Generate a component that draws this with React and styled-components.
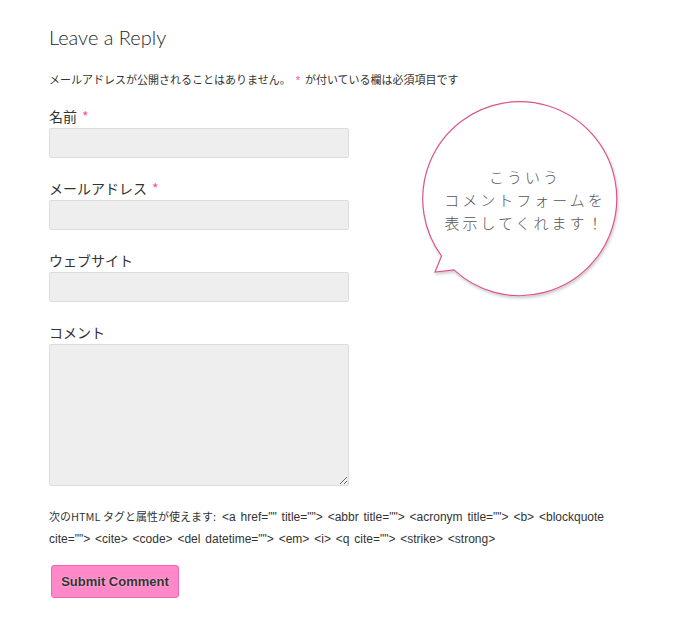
import React from "react";
import styled, { createGlobalStyle } from "styled-components";

const GlobalStyle = createGlobalStyle`
  body {
    margin: 0;
    background: #ffffff;
    font-family: "Liberation Sans", "Noto Sans CJK JP", sans-serif;
    color: #333333;
  }
`;

const Page = styled.div`
  position: relative;
  width: 690px;
  height: 627px;
  padding: 22px 0 0 49px;
  box-sizing: border-box;
`;

const Title = styled.h3`
  margin: 0 0 20px;
  font-family: "Lato", "Noto Sans CJK JP", sans-serif;
  font-weight: 300;
  font-size: 20px;
  line-height: 30px;
  color: #1f1f1f;
`;

const Notes = styled.p`
  margin: 0 0 19px;
  font-size: 11px;
  line-height: 16px;
  color: #333;
`;

const Required = styled.span`
  color: #ff4f9f;
  margin: 0 ${(p) => (p.$tight ? 0 : 5)}px 0 5px;
`;

const Field = styled.div`
  display: flex;
  flex-direction: column;
  margin-bottom: 21px;
`;

const Label = styled.label`
  font-size: 14px;
  line-height: 18px;
  margin-bottom: 3px;
  color: #333;
  font-family: "Noto Sans CJK JP", sans-serif;
  font-weight: 400;
`;

const Input = styled.input`
  width: 300px;
  height: 30px;
  box-sizing: border-box;
  background: #eeeeee;
  border: 1px solid #dcdcdc;
  border-radius: 2px;
  margin: 0;
`;

const TextArea = styled.textarea`
  width: 300px;
  height: 142px;
  box-sizing: border-box;
  background: #eeeeee;
  border: 1px solid #dcdcdc;
  border-radius: 2px;
  margin: 0;
  display: block;
`;

const Allowed = styled.p`
  margin: -1px 0 15px;
  width: 580px;
  font-size: 12px;
  line-height: 22px;
  word-spacing: 1.5px;
  color: #333;
`;

const AllowedIntro = styled.span`
  font-family: "Noto Sans CJK JP", sans-serif;
  font-size: 11px;
  line-height: 16px;
  word-spacing: 0;
  margin-right: 6px;
`;

const SubmitButton = styled.button`
  display: block;
  margin-left: 2px;
  width: 128px;
  height: 33px;
  background: #ff88c8;
  border: 1px solid #f266b4;
  border-radius: 3px;
  font-family: "Liberation Sans", sans-serif;
  font-weight: bold;
  font-size: 13px;
  color: #333;
  text-shadow: 0 0 2px rgba(255, 255, 255, 0.6);
  padding: 0;
`;

const Bubble = styled.div`
  position: absolute;
  left: 420px;
  top: 98px;
  width: 210px;
  height: 210px;

  svg {
    display: block;
  }
`;

const BubbleText = styled.div`
  position: absolute;
  left: 0;
  width: 206px;
  top: 67px;
  text-align: center;
  font-family: "Noto Sans CJK JP", sans-serif;
  font-weight: 300;
  font-size: 15px;
  line-height: 23px;
  letter-spacing: 3px;
  color: #555;
  padding-left: 2px;
`;

const SpeechBubble = () => (
  <Bubble>
    <svg width="210" height="210" viewBox="0 0 210 210">
      <defs>
        <filter id="sh" x="-10%" y="-10%" width="125%" height="125%">
          <feDropShadow dx="1" dy="2" stdDeviation="1.5" floodColor="#000" floodOpacity="0.2" />
        </filter>
      </defs>
      <path
        d="M 21.5 158 A 97 97 0 1 1 33.9 171.9 L 15 174 Z"
        fill="#fff"
        stroke="#d9558c"
        strokeWidth="1.2"
        filter="url(#sh)"
      />
    </svg>
    <BubbleText>
      こういう
      <br />
      コメントフォームを
      <br />
      表示してくれます！
    </BubbleText>
  </Bubble>
);

export default function App() {
  return (
    <>
      <GlobalStyle />
      <Page>
        <Title>Leave a Reply</Title>
        <Notes>
          メールアドレスが公開されることはありません。<Required>*</Required>が付いている欄は必須項目です
        </Notes>
        <Field>
          <Label>
            名前<Required $tight>*</Required>
          </Label>
          <Input type="text" />
        </Field>
        <Field>
          <Label>
            メールアドレス<Required $tight>*</Required>
          </Label>
          <Input type="text" />
        </Field>
        <Field>
          <Label>ウェブサイト</Label>
          <Input type="text" />
        </Field>
        <Field>
          <Label>コメント</Label>
          <TextArea />
        </Field>
        <Allowed>
          <AllowedIntro>次のHTML タグと属性が使えます:</AllowedIntro>
          &lt;a href="" title=""&gt; &lt;abbr title=""&gt; &lt;acronym title=""&gt; &lt;b&gt;
          &lt;blockquote cite=""&gt; &lt;cite&gt; &lt;code&gt; &lt;del datetime=""&gt; &lt;em&gt;
          &lt;i&gt; &lt;q cite=""&gt; &lt;strike&gt; &lt;strong&gt;
        </Allowed>
        <SubmitButton>Submit Comment</SubmitButton>
        <SpeechBubble />
      </Page>
    </>
  );
}
